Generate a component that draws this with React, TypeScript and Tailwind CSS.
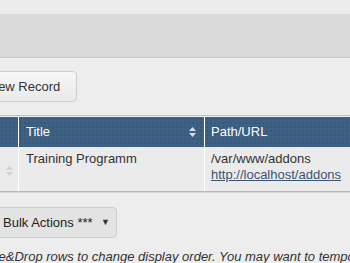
import React from 'react';

const headerBg =
  'bg-[#3e6082] bg-[image:radial-gradient(circle,_#38597b_35%,_transparent_45%)] bg-[length:4px_4px]';

function SortIcon({ className }: { className?: string }) {
  return (
    <svg width="7" height="10" viewBox="0 0 7 10" className={className}>
      <path d="M3.5 0 L7 4 H0 Z" fill="currentColor" />
      <path d="M3.5 10 L7 6 H0 Z" fill="currentColor" />
    </svg>
  );
}

export default function App() {
  return (
    <div
      className="w-[350px] h-[263px] overflow-hidden bg-[#ededed] text-[13px] text-[#333]"
      style={{ fontFamily: '"Liberation Sans", Arial, sans-serif' }}
    >
      <div className="h-[14px] bg-[#ececec]" />
      <div className="h-[44px] bg-[#dadada] border-b border-[#c4c4c4]" />
      <div className="h-px bg-[#f4f4f4]" />

      <div className="flex pt-[12px]">
        <button className="-ml-[51px] h-[31px] whitespace-nowrap flex items-center pl-[12px] pr-[16px] rounded-[4px] border border-[#cfcfcf] bg-gradient-to-b from-[#f7f7f7] to-[#e9e9e9] text-[#333] text-[13px]">
          Add New Record
        </button>
      </div>

      <div className="mt-[13px] border-t border-[#bdbdbd]">
        <div className="h-px bg-[#f2f2f2]" />
        <div className="flex">
          <div className="w-[18px] flex flex-col">
            <div className={`h-[30px] ${headerBg}`} />
            <div className="h-[44px] bg-[#ebebeb] flex items-center justify-center pt-[3px]">
              <SortIcon className="text-[#d2d2d2]" />
            </div>
          </div>
          <div className="w-px bg-white" />
          <div className="w-[185px] flex flex-col">
            <div className={`h-[30px] ${headerBg} flex items-center justify-between pl-[7px] pr-[8px] text-white text-[13px]`}>
              <span>Title</span>
              <SortIcon className="text-[#d8dee5]" />
            </div>
            <div className="h-[44px] bg-[#ebebeb] pl-[7px] pt-[4px] leading-[16px]">
              Training Programm
            </div>
          </div>
          <div className="w-px bg-white" />
          <div className="flex-1 flex flex-col">
            <div className={`h-[30px] ${headerBg} flex items-center pl-[6px] text-white text-[13px]`}>
              Path/URL
            </div>
            <div className="h-[44px] bg-[#ebebeb] pl-[6px] pt-[4px] leading-[16px]">
              <div>/var/www/addons</div>
              <a href="#" className="underline text-[#3a5673]">
                http://localhost/addons
              </a>
            </div>
          </div>
        </div>
        <div className="h-px bg-[#b9b9b9]" />
        <div className="h-px bg-[#d8d8d8]" />
      </div>

      <div className="flex pt-[14px]">
        <div className="-ml-[10px] w-[127px] h-[31px] rounded-[4px] border border-[#cdcdcd] bg-[#e3e3e3] flex items-center pl-[12px] pr-[6px] justify-between text-[#222]">
          <span>Bulk Actions ***</span>
          <span className="text-[9px] text-[#333]">▼</span>
        </div>
      </div>

      <p className="mt-[11px] -ml-[26px] whitespace-nowrap italic text-[13px] leading-[16px] text-[#333]">
        Move&amp;Drop rows to change display order. You may want to temporarily
      </p>
    </div>
  );
}
